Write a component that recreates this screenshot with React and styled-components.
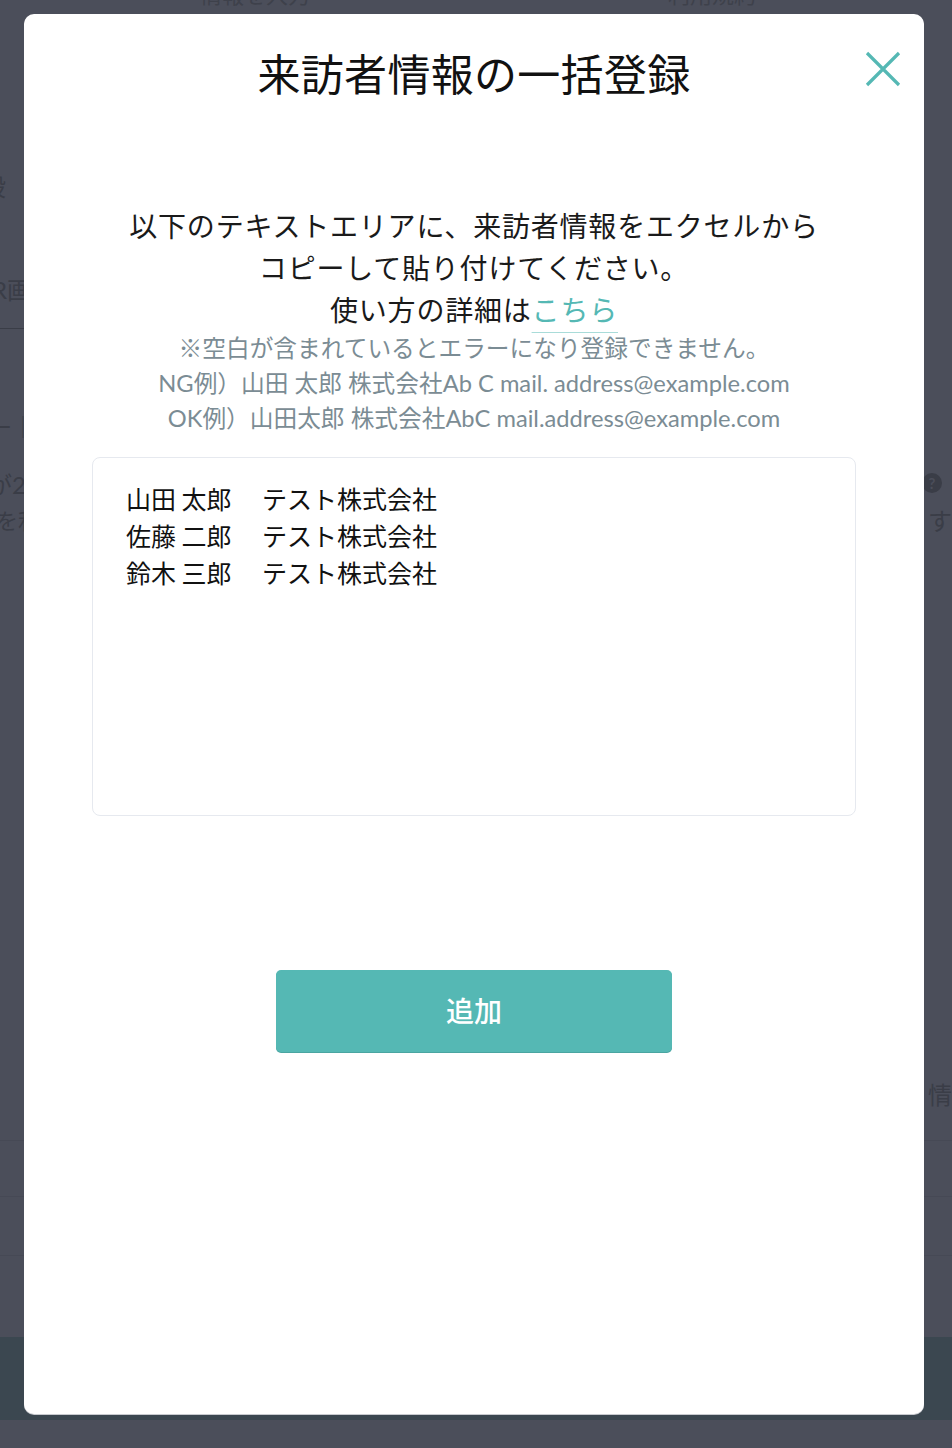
import styled, { createGlobalStyle } from 'styled-components';

const GlobalStyle = createGlobalStyle`
  html, body {
    margin: 0;
    padding: 0;
    background: #4b4e5a;
  }
  * {
    box-sizing: border-box;
  }
`;

const names = [
  ['山田 太郎', 'テスト株式会社'],
  ['佐藤 二郎', 'テスト株式会社'],
  ['鈴木 三郎', 'テスト株式会社'],
];

const App = () => {
  const sample = names.map(n => n.join('\t')).join('\n');

  return (
    <>
      <GlobalStyle />
      <Page>
        <Backdrop>
          <TopRow>
            <GhostText>情報を入力</GhostText>
            <GhostText>利用規約</GhostText>
          </TopRow>
          <EdgeRow top={161}>
            <CutText shift={-18}>段</CutText>
          </EdgeRow>
          <EdgeRow top={67}>
            <CutText shift={-8}>R画面</CutText>
          </EdgeRow>
          <EdgeLine />
          <EdgeRow top={78}>
            <CutText shift={-10} size={22}>ー｜</CutText>
          </EdgeRow>
          <EdgeRow top={22}>
            <CutText shift={-12}>が2</CutText>
            <HelpIcon>?</HelpIcon>
          </EdgeRow>
          <EdgeRow top={0}>
            <CutText shift={-4} size={22}>を利用</CutText>
            <RightText>す</RightText>
          </EdgeRow>
          <EdgeRow top={538}>
            <span />
            <RightText>情</RightText>
          </EdgeRow>
          <Divider top={29} />
          <Divider top={55} />
          <Divider top={58} />
          <Footer />
        </Backdrop>

        <Modal>
          <Title>来訪者情報の一括登録</Title>
          <CloseButton aria-label="閉じる">
            <svg width="36" height="36" viewBox="0 0 36 36">
              <path
                d="M2 2 L34 34 M34 2 L2 34"
                stroke="#55b8b4"
                strokeWidth="3.2"
                fill="none"
              />
            </svg>
          </CloseButton>

          <Lead>
            以下のテキストエリアに、来訪者情報をエクセルから
            <br />
            コピーして貼り付けてください。
            <br />
            使い方の詳細は<HelpLink href="#">こちら</HelpLink>
          </Lead>

          <Notes>
            <div>※空白が含まれているとエラーになり登録できません。</div>
            <div>NG例）山田 太郎 株式会社Ab C mail. address@example.com</div>
            <div>OK例）山田太郎 株式会社AbC mail.address@example.com</div>
          </Notes>

          <PasteArea defaultValue={sample} spellCheck={false} />

          <SubmitButton>追加</SubmitButton>
        </Modal>
      </Page>
    </>
  );
};

const Page = styled.div`
  position: relative;
  width: 952px;
  height: 1448px;
  overflow: hidden;
  font-family: 'Lato', 'Noto Sans CJK JP', sans-serif;
`;

const Backdrop = styled.div`
  display: flex;
  flex-direction: column;
  height: 100%;
  color: #3b3e48;
`;

const TopRow = styled.div`
  display: flex;
  justify-content: space-between;
  padding: 0 196px 0 200px;
  margin-top: -16px;
  height: 22px;
  font-size: 22px;
  line-height: 22px;
`;

const GhostText = styled.span`
  color: #3e414b;
`;

const EdgeRow = styled.div`
  display: flex;
  justify-content: space-between;
  align-items: center;
  margin-top: ${props => props.top}px;
  height: 36px;
  font-size: 24px;
`;

const CutText = styled.span`
  display: block;
  margin-left: ${props => props.shift}px;
  white-space: nowrap;
  font-size: ${props => props.size || 24}px;
  color: #3a3d47;
`;

const RightText = styled.span`
  width: 28px;
  padding-left: 4px;
  color: #3a3d47;
  font-size: 24px;
`;

const HelpIcon = styled.span`
  display: flex;
  align-items: center;
  justify-content: center;
  width: 20px;
  height: 20px;
  margin-right: 10px;
  border-radius: 50%;
  background: #3a3d47;
  color: #4b4e5a;
  font-size: 15px;
  font-weight: 700;
`;

const EdgeLine = styled.div`
  height: 1px;
  width: 24px;
  margin-top: 22px;
  background: #3a3d47;
`;

const Divider = styled.div`
  height: 1px;
  margin-top: ${props => props.top}px;
  background: #464955;
`;

const Footer = styled.div`
  margin-top: 81px;
  height: 83px;
  background: #3b4750;
`;

const Modal = styled.div`
  position: absolute;
  top: 14px;
  left: 24px;
  width: 900px;
  height: 1400px;
  background: #fff;
  border-radius: 10px;
  box-shadow: 0 1px 0 #c8cacf;
  display: flex;
  flex-direction: column;
  align-items: center;
  padding-top: 36px;
`;

const Title = styled.h1`
  margin: 0;
  font-size: 43px;
  line-height: 44px;
  font-weight: 400;
  color: #111;
  font-family: 'Noto Sans CJK JP', sans-serif;
  letter-spacing: 0.3px;
`;

const CloseButton = styled.button`
  position: absolute;
  top: 37px;
  right: 23px;
  padding: 0;
  border: none;
  background: none;
  cursor: pointer;
  line-height: 0;
`;

const Lead = styled.p`
  margin: 110px 0 0;
  text-align: center;
  font-size: 28px;
  line-height: 42px;
  letter-spacing: 0.8px;
  color: #1a1a1a;
  font-family: 'Noto Sans CJK JP', sans-serif;
`;

const HelpLink = styled.a`
  color: #55b8b4;
  text-decoration: underline;
  text-decoration-color: #a9dcd9;
  text-decoration-thickness: 1px;
  text-underline-offset: 11px;
`;

const Notes = styled.div`
  margin-top: 1px;
  text-align: center;
  font-size: 23.7px;
  line-height: 35px;
  color: #7b8c94;
`;

const PasteArea = styled.textarea`
  display: block;
  width: 764px;
  height: 359px;
  margin-top: 21px;
  padding: 22px 33px;
  border: 1px solid #e6e9ef;
  border-radius: 8px;
  resize: none;
  outline: none;
  font-family: 'Noto Sans CJK JP', sans-serif;
  font-size: 25px;
  line-height: 37px;
  color: #111;
  tab-size: 136px;
  white-space: pre;
  overflow: hidden;
`;

const SubmitButton = styled.button`
  margin-top: 154px;
  width: 396px;
  height: 82px;
  padding: 0 0 3px;
  border: none;
  border-radius: 5px;
  background: #55b8b4;
  box-shadow: 0 1px 0 #4aa5a1;
  color: #fff;
  font-family: 'Noto Sans CJK JP', sans-serif;
  font-size: 28px;
  font-weight: 500;
  cursor: pointer;
`;

export default App;
